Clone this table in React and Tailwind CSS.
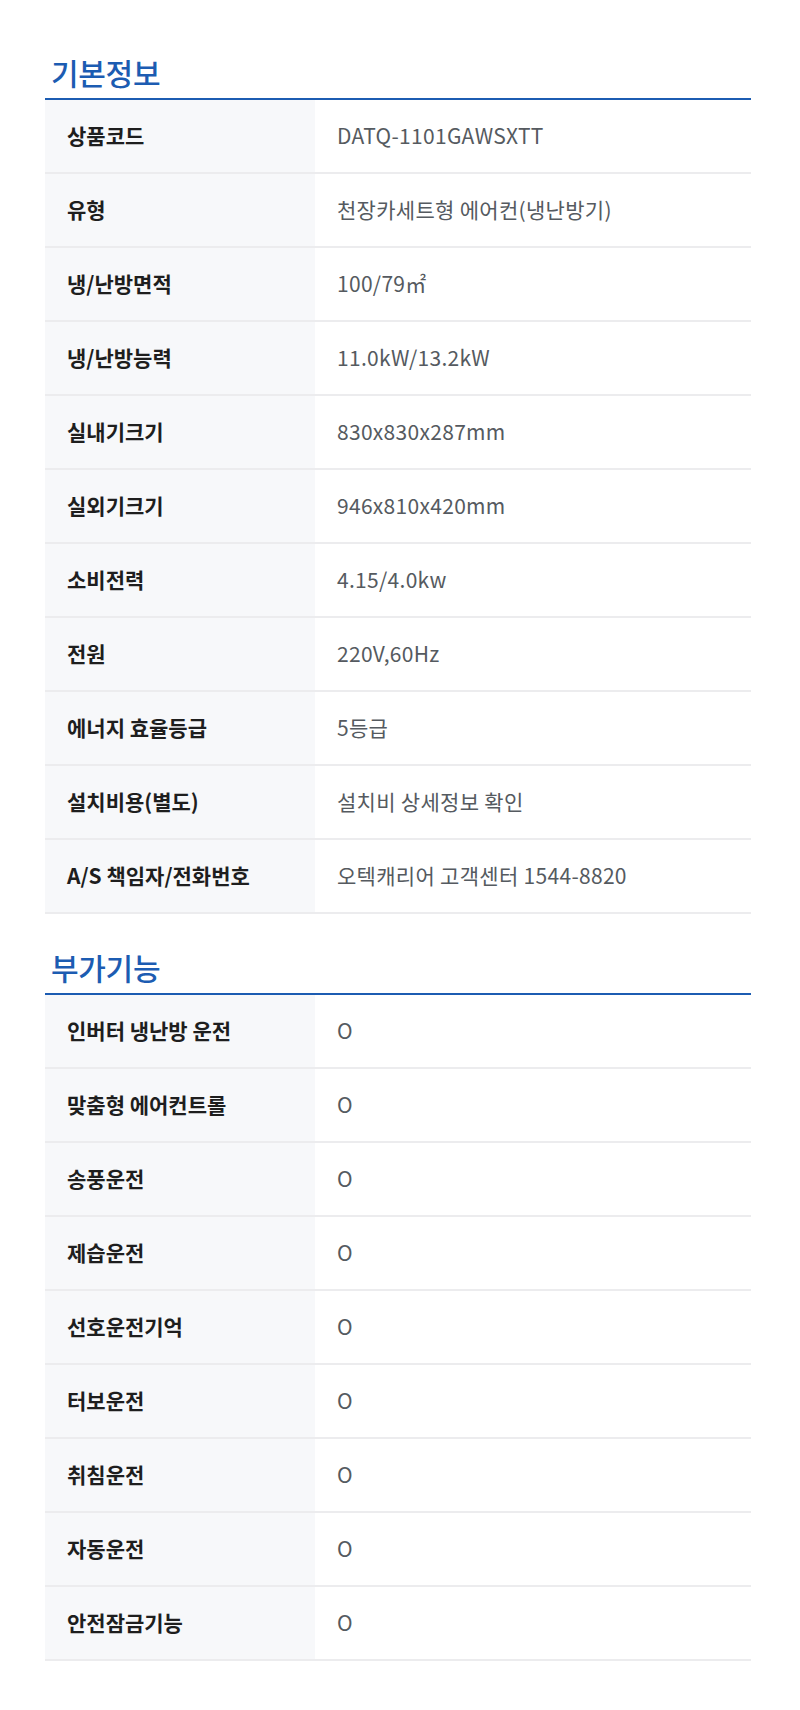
import React from "react";

const basic = [
  ["상품코드", "DATQ-1101GAWSXTT"],
  ["유형", "천장카세트형 에어컨(냉난방기)"],
  ["냉/난방면적", "100/79㎡"],
  ["냉/난방능력", "11.0kW/13.2kW"],
  ["실내기크기", "830x830x287mm"],
  ["실외기크기", "946x810x420mm"],
  ["소비전력", "4.15/4.0kw"],
  ["전원", "220V,60Hz"],
  ["에너지 효율등급", "5등급"],
  ["설치비용(별도)", "설치비 상세정보 확인"],
  ["A/S 책임자/전화번호", "오텍캐리어 고객센터 1544-8820"],
];

const extra = [
  ["인버터 냉난방 운전", "O"],
  ["맞춤형 에어컨트롤", "O"],
  ["송풍운전", "O"],
  ["제습운전", "O"],
  ["선호운전기억", "O"],
  ["터보운전", "O"],
  ["취침운전", "O"],
  ["자동운전", "O"],
  ["안전잠금기능", "O"],
];

function Section({ title, rows, className }) {
  return (
    <section className={className}>
      <h2 className="text-[30px] leading-[40px] font-medium text-[#1c5cb2] pl-[6px] pb-[6px] border-b-2 border-[#1c5cb2] tracking-[-0.3px]">
        {title}
      </h2>
      <div>
        {rows.map(([k, v]) => (
          <div key={k} className="flex h-[74px] border-b-2 border-[#ececee]">
            <div className="w-[270px] shrink-0 bg-[#f7f8fa] flex items-center pl-[22px] text-[21px] font-semibold text-[#1e1e1e]">
              {k}
            </div>
            <div className="flex-1 flex items-center pl-[22px] text-[21px] text-[#555a60] tracking-[0.3px]">
              {v}
            </div>
          </div>
        ))}
      </div>
    </section>
  );
}

export default function App() {
  return (
    <div
      className="w-[800px] min-h-[1710px] bg-white pl-[45px] pr-[49px] pt-[52px]"
      style={{ fontFamily: '"Noto Sans CJK KR", "Noto Sans", sans-serif' }}
    >
      <Section title="기본정보" rows={basic} />
      <Section title="부가기능" rows={extra} className="mt-[33px]" />
    </div>
  );
}
